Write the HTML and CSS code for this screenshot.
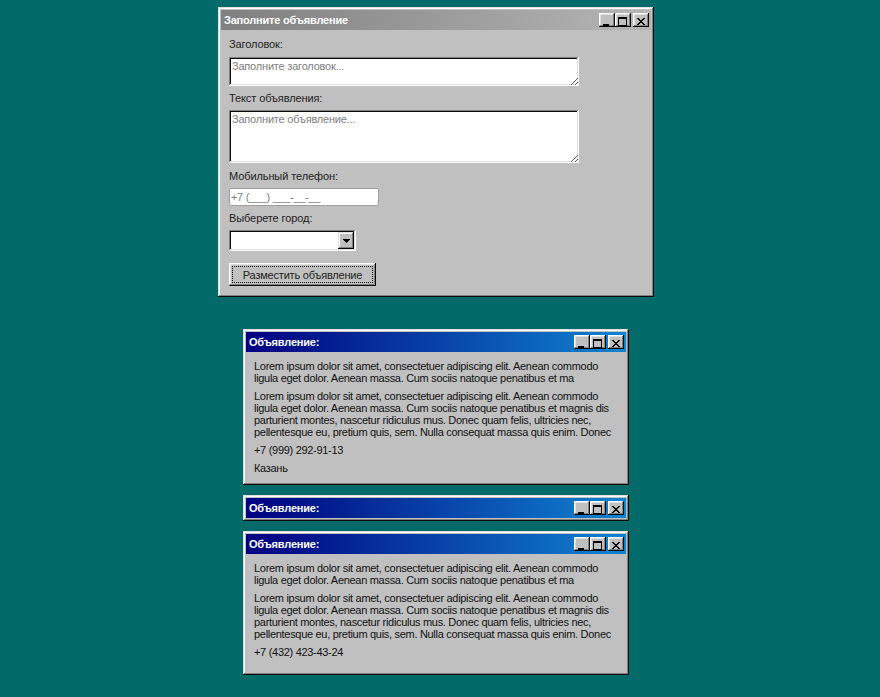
FILE: index.html
```html
<!DOCTYPE html>
<html lang="ru">
<head>
<meta charset="utf-8">
<title>Объявления</title>
<link rel="stylesheet" href="styles.css">
</head>
<body>
<div class="desktop">
  <div class="window form-window">
    <div class="title-bar inactive">
      <div class="title-bar-text">Заполните объявление</div>
      <div class="title-bar-controls">
        <button class="tb-btn" aria-label="Minimize"><svg class="ic-min" width="6" height="2" viewBox="0 0 6 2"><rect width="6" height="2" fill="#000"/></svg></button>
        <button class="tb-btn" aria-label="Maximize"><svg class="ic-max" width="9" height="9" viewBox="0 0 9 9"><path fill="#000" fill-rule="evenodd" d="M9 0H0v9h9V0zM8 2H1v6h7V2z"/></svg></button>
        <button class="tb-btn tb-close" aria-label="Close"><svg class="ic-close" width="8" height="7" viewBox="0 0 8 7"><path fill="#000" d="M0 0h2v1h1v1h2V1h1V0h2v1H7v1H6v1H5v1h1v1h1v1h1v1H6V6H5V5H3v1H2v1H0V6h1V5h1V4h1V3H2V2H1V1H0V0z"/></svg></button>
      </div>
    </div>
    <div class="window-body form-body">
      <label class="field-label l1">Заголовок:</label>
      <textarea class="field ta-title" placeholder="Заполните заголовок..."></textarea>
      <label class="field-label l2">Текст объявления:</label>
      <textarea class="field ta-text" placeholder="Заполните объявление..."></textarea>
      <label class="field-label l3">Мобильный телефон:</label>
      <input class="phone" type="tel" placeholder="+7 (___) ___-__-__">
      <label class="field-label l4">Выберете город:</label>
      <div class="select-box">
        <select class="city"><option></option></select>
        <span class="drop-btn"><svg width="7" height="4" viewBox="0 0 7 4"><path fill="#000" d="M0 0h7v1H6v1H5v1H4v1H3V3H2V2H1V1H0z"/></svg></span>
      </div>
      <button class="submit">Разместить объявление</button>
    </div>
  </div>

  <div class="ad-list">
    <div class="window ad-window">
      <div class="title-bar">
        <div class="title-bar-text">Объявление:</div>
        <div class="title-bar-controls">
          <button class="tb-btn" aria-label="Minimize"><svg class="ic-min" width="6" height="2" viewBox="0 0 6 2"><rect width="6" height="2" fill="#000"/></svg></button>
          <button class="tb-btn" aria-label="Maximize"><svg class="ic-max" width="9" height="9" viewBox="0 0 9 9"><path fill="#000" fill-rule="evenodd" d="M9 0H0v9h9V0zM8 2H1v6h7V2z"/></svg></button>
          <button class="tb-btn tb-close" aria-label="Close"><svg class="ic-close" width="8" height="7" viewBox="0 0 8 7"><path fill="#000" d="M0 0h2v1h1v1h2V1h1V0h2v1H7v1H6v1H5v1h1v1h1v1h1v1H6V6H5V5H3v1H2v1H0V6h1V5h1V4h1V3H2V2H1V1H0V0z"/></svg></button>
        </div>
      </div>
      <div class="window-body ad-body">
        <p>Lorem ipsum dolor sit amet, consectetuer adipiscing elit. Aenean commodo ligula eget dolor. Aenean massa. Cum sociis natoque penatibus et ma</p>
        <p>Lorem ipsum dolor sit amet, consectetuer adipiscing elit. Aenean commodo ligula eget dolor. Aenean massa. Cum sociis natoque penatibus et magnis dis parturient montes, nascetur ridiculus mus. Donec quam felis, ultricies nec, pellentesque eu, pretium quis, sem. Nulla consequat massa quis enim. Donec</p>
        <p>+7 (999) 292-91-13</p>
        <p class="city-name">Казань</p>
      </div>
    </div>

    <div class="window ad-window collapsed">
      <div class="title-bar">
        <div class="title-bar-text">Объявление:</div>
        <div class="title-bar-controls">
          <button class="tb-btn" aria-label="Minimize"><svg class="ic-min" width="6" height="2" viewBox="0 0 6 2"><rect width="6" height="2" fill="#000"/></svg></button>
          <button class="tb-btn" aria-label="Maximize"><svg class="ic-max" width="9" height="9" viewBox="0 0 9 9"><path fill="#000" fill-rule="evenodd" d="M9 0H0v9h9V0zM8 2H1v6h7V2z"/></svg></button>
          <button class="tb-btn tb-close" aria-label="Close"><svg class="ic-close" width="8" height="7" viewBox="0 0 8 7"><path fill="#000" d="M0 0h2v1h1v1h2V1h1V0h2v1H7v1H6v1H5v1h1v1h1v1h1v1H6V6H5V5H3v1H2v1H0V6h1V5h1V4h1V3H2V2H1V1H0V0z"/></svg></button>
        </div>
      </div>
    </div>

    <div class="window ad-window">
      <div class="title-bar">
        <div class="title-bar-text">Объявление:</div>
        <div class="title-bar-controls">
          <button class="tb-btn" aria-label="Minimize"><svg class="ic-min" width="6" height="2" viewBox="0 0 6 2"><rect width="6" height="2" fill="#000"/></svg></button>
          <button class="tb-btn" aria-label="Maximize"><svg class="ic-max" width="9" height="9" viewBox="0 0 9 9"><path fill="#000" fill-rule="evenodd" d="M9 0H0v9h9V0zM8 2H1v6h7V2z"/></svg></button>
          <button class="tb-btn tb-close" aria-label="Close"><svg class="ic-close" width="8" height="7" viewBox="0 0 8 7"><path fill="#000" d="M0 0h2v1h1v1h2V1h1V0h2v1H7v1H6v1H5v1h1v1h1v1h1v1H6V6H5V5H3v1H2v1H0V6h1V5h1V4h1V3H2V2H1V1H0V0z"/></svg></button>
        </div>
      </div>
      <div class="window-body ad-body">
        <p>Lorem ipsum dolor sit amet, consectetuer adipiscing elit. Aenean commodo ligula eget dolor. Aenean massa. Cum sociis natoque penatibus et ma</p>
        <p>Lorem ipsum dolor sit amet, consectetuer adipiscing elit. Aenean commodo ligula eget dolor. Aenean massa. Cum sociis natoque penatibus et magnis dis parturient montes, nascetur ridiculus mus. Donec quam felis, ultricies nec, pellentesque eu, pretium quis, sem. Nulla consequat massa quis enim. Donec</p>
        <p>+7 (432) 423-43-24</p>
        <p class="city-name"></p>
      </div>
    </div>
  </div>
</div>
</body>
</html>
```

FILE: styles.css
```css
* {
  box-sizing: border-box;
}

body {
  margin: 0;
  background: #026b69;
  font-family: "Liberation Sans", Arial, sans-serif;
  font-size: 11px;
  color: #222;
}

.desktop {
  width: 872px;
  padding-top: 7px;
  display: flex;
  flex-direction: column;
  align-items: center;
}

.window {
  background: #c0c0c0;
  box-shadow: inset -1px -1px #0a0a0a, inset 1px 1px #dfdfdf, inset -2px -2px #808080, inset 2px 2px #fff;
  padding: 3px;
}

.title-bar {
  height: 20px;
  padding: 3px 2px 3px 3px;
  display: flex;
  align-items: center;
  justify-content: space-between;
  background: linear-gradient(90deg, #000080, #1084d0);
}

.title-bar.inactive {
  background: linear-gradient(90deg, #808080, #b5b5b5);
}

.title-bar-text {
  color: #fff;
  font-weight: bold;
  font-size: 11px;
  letter-spacing: -0.2px;
  line-height: 13px;
}

.title-bar-controls {
  display: flex;
}

.tb-btn {
  width: 16px;
  height: 14px;
  padding: 0;
  border: none;
  background: #c0c0c0;
  box-shadow: inset -1px -1px #0a0a0a, inset 1px 1px #fff, inset -2px -2px #808080, inset 2px 2px #dfdfdf;
  display: block;
}

.tb-btn svg {
  display: block;
}

.ic-min {
  margin: 9px 0 0 4px;
}

.ic-max {
  margin: 2px 0 0 3px;
}

.ic-close {
  margin: 3px 0 0 4px;
}

.tb-close {
  margin-left: 2px;
}

/* form window */
.form-window {
  width: 436px;
}

.form-body {
  margin: 8px;
  display: flex;
  flex-direction: column;
  align-items: flex-start;
}

.field-label {
  line-height: 13px;
  letter-spacing: -0.1px;
  color: #222;
}

.l2 { margin-top: 6px; }
.l3 { margin-top: 7px; }
.l4 { margin-top: 6px; }

.field {
  display: block;
  width: 350px;
  margin-top: 6px;
  padding: 3px 3px;
  border: none;
  background: #fff;
  box-shadow: inset -1px -1px #fff, inset 1px 1px #808080, inset -2px -2px #dfdfdf, inset 2px 2px #0a0a0a;
  font-family: "Liberation Sans", Arial, sans-serif;
  font-size: 11px;
  letter-spacing: -0.2px;
  line-height: 13px;
  resize: both;
  outline: none;
}

.field::placeholder,
.phone::placeholder {
  color: #808080;
}

.ta-title {
  height: 29px;
}

.ta-text {
  height: 53px;
  margin-top: 5px;
}

.phone {
  display: block;
  width: 150px;
  height: 18px;
  margin-top: 5px;
  padding: 0 1px;
  border: 1px solid #a0a0a0;
  border-radius: 2px;
  background: #fff;
  font-family: "Liberation Sans", Arial, sans-serif;
  font-size: 11px;
  letter-spacing: -0.3px;
  outline: none;
}

.select-box {
  display: flex;
  width: 127px;
  height: 21px;
  margin-top: 5px;
  padding: 2px;
  background: #fff;
  box-shadow: inset -1px -1px #fff, inset 1px 1px #808080, inset -2px -2px #dfdfdf, inset 2px 2px #0a0a0a;
}

.city {
  flex: 1;
  min-width: 0;
  appearance: none;
  -webkit-appearance: none;
  border: none;
  background: transparent;
  outline: none;
  font-family: "Liberation Sans", Arial, sans-serif;
  font-size: 11px;
}

.drop-btn {
  width: 16px;
  height: 17px;
  background: #c0c0c0;
  box-shadow: inset -1px -1px #0a0a0a, inset 1px 1px #dfdfdf, inset -2px -2px #808080, inset 2px 2px #fff;
  display: flex;
  align-items: center;
  justify-content: center;
}

.submit {
  margin-top: 12px;
  width: 147px;
  height: 23px;
  padding: 0 12px;
  border: none;
  background: #c0c0c0;
  box-shadow: inset -1px -1px #0a0a0a, inset 1px 1px #fff, inset -2px -2px #808080, inset 2px 2px #dfdfdf;
  font-family: "Liberation Sans", Arial, sans-serif;
  font-size: 11px;
  letter-spacing: -0.2px;
  color: #222;
  outline: 1px dotted #000;
  outline-offset: -4px;
}

/* ads */
.ad-list {
  margin-top: 32px;
  display: flex;
  flex-direction: column;
  align-items: center;
  gap: 10px;
}

.ad-window {
  width: 386px;
}

.ad-body {
  margin: 8px;
  display: flow-root;
}

.ad-body p {
  margin: 0;
  line-height: 12px;
  letter-spacing: -0.3px;
  color: #111;
}

.ad-body p + p {
  margin-top: 6px;
}
```
